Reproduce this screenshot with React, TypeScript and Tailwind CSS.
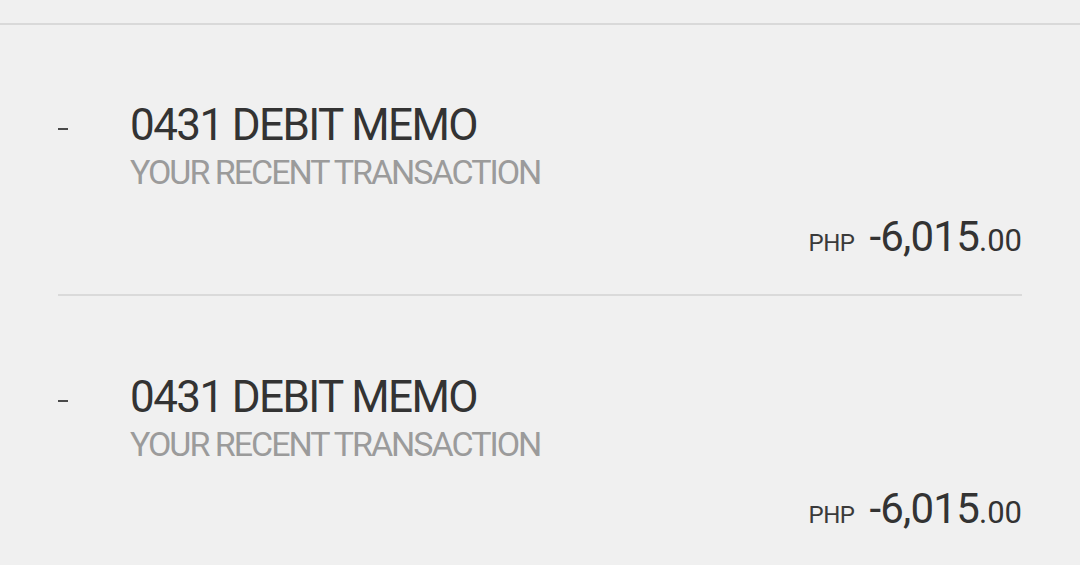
import React from 'react'

type Txn = {
  id: number
  title: string
  sub: string
  currency: string
  whole: string
  cents: string
}

const txns: Txn[] = [
  { id: 1, title: '0431 DEBIT MEMO', sub: 'YOUR RECENT TRANSACTION', currency: 'PHP', whole: '-6,015', cents: '.00' },
  { id: 2, title: '0431 DEBIT MEMO', sub: 'YOUR RECENT TRANSACTION', currency: 'PHP', whole: '-6,015', cents: '.00' },
]

function TxnRow({ txn, first, last }: { txn: Txn; first: boolean; last: boolean }) {
  return (
    <div className={`${first ? 'pt-[76px]' : 'pt-[77px]'} pb-[33px] ${last ? '' : 'border-b-2 border-[#dadada]'}`}>
      <div className="flex items-start">
        {/* bullet dash */}
        <div className="w-[72px] pt-[27px]">
          <div className="w-[10px] h-[2px] bg-[#4a4a4a]" />
        </div>
        <div className="flex flex-col">
          <div className="text-[44px] leading-[48px] tracking-[-1.6px] text-[#333] whitespace-nowrap">{txn.title}</div>
          <div className="mt-[3px] text-[34px] leading-[40px] tracking-[-2px] text-[#9b9b9b] whitespace-nowrap">{txn.sub}</div>
        </div>
      </div>
      <div className="mt-[21px] flex justify-end items-baseline h-[48px] leading-[48px] text-[#333]">
        <span className="text-[24px] tracking-[-0.5px] mr-[15px] text-[#3a3a3a]">{txn.currency}</span>
        <span className="text-[42px] tracking-[-0.8px]">{txn.whole}</span>
        <span className="text-[31px]">{txn.cents}</span>
      </div>
    </div>
  )
}

export default function App() {
  return (
    <div className="w-[1080px] h-[565px] overflow-hidden bg-[#f0f0f0]" style={{ fontFamily: 'Roboto, "Open Sans", sans-serif' }}>
      <div className="h-[25px] border-b-2 border-[#d9d9d9]" />
      <div className="px-[58px]">
        {txns.map((t, i) => (
          <TxnRow key={t.id} txn={t} first={i === 0} last={i === txns.length - 1} />
        ))}
      </div>
    </div>
  )
}
